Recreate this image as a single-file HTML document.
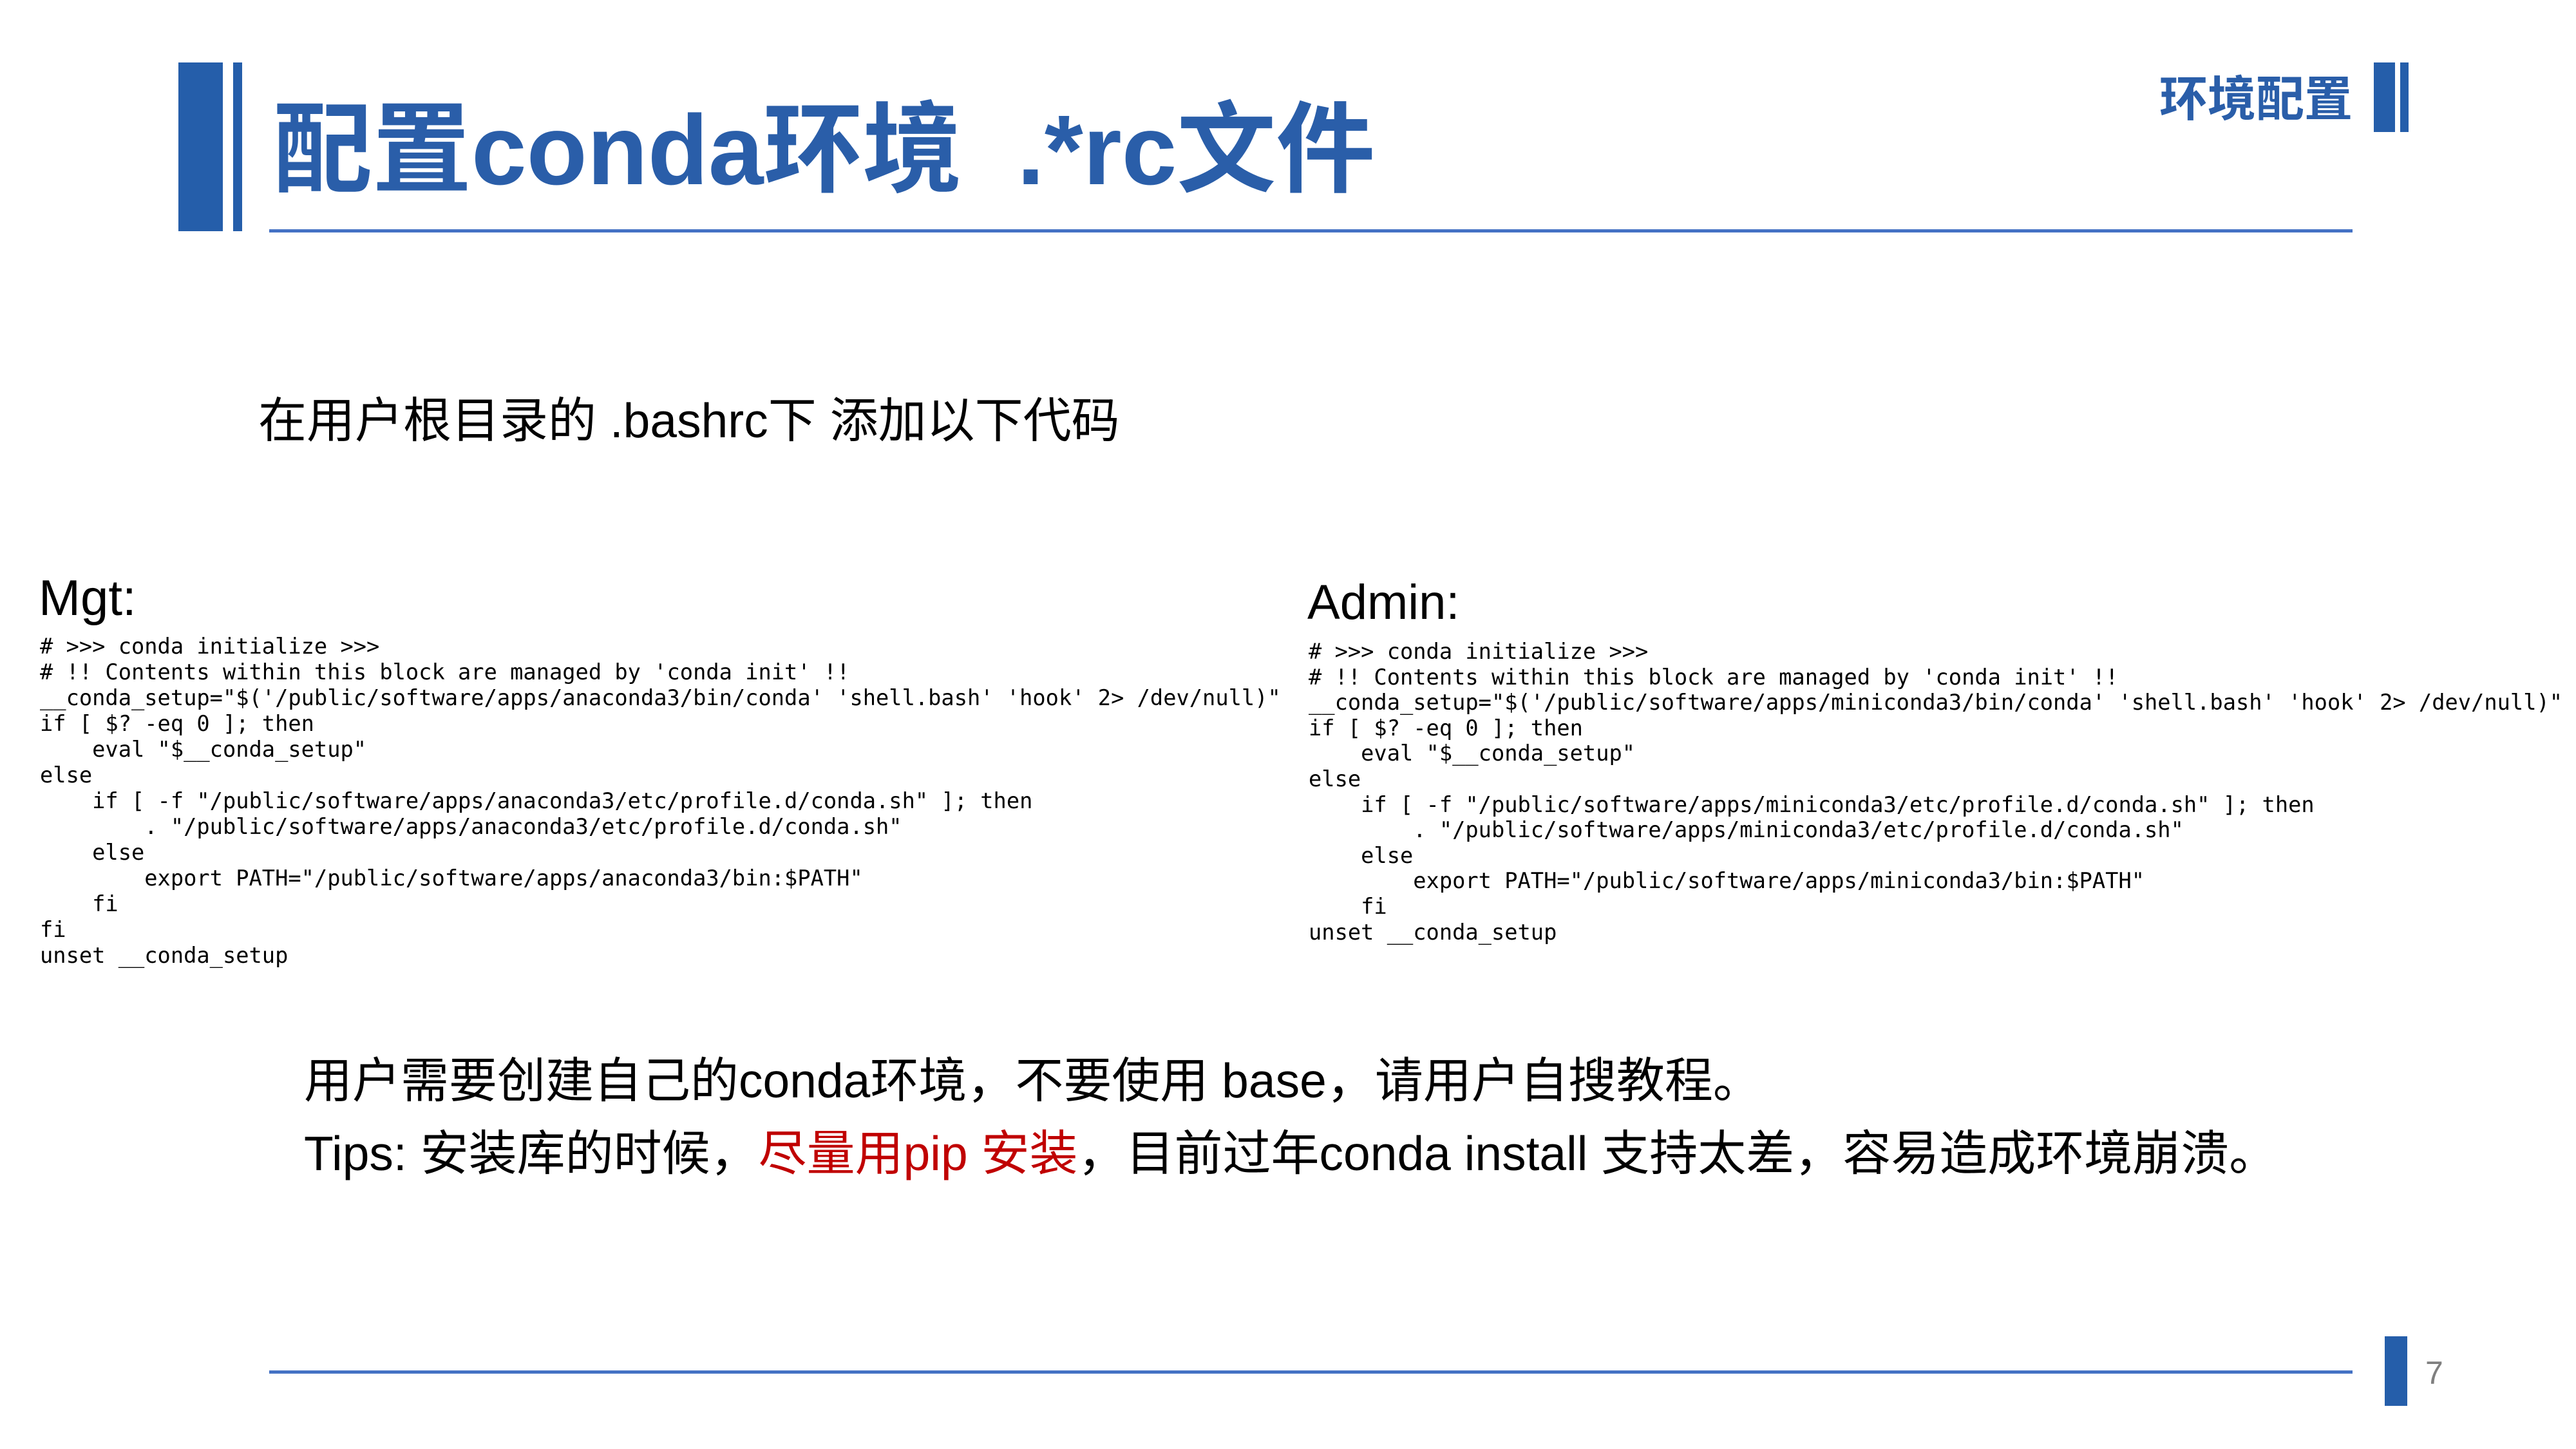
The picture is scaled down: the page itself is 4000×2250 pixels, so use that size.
<!DOCTYPE html>
<html><head><meta charset="utf-8"><style>
html,body{margin:0;padding:0;background:#fff;}
body{width:4000px;height:2250px;position:relative;overflow:hidden;font-family:"Liberation Sans","Noto Sans CJK SC",sans-serif;}
.a{position:absolute;white-space:pre;}
.code{font-family:"DejaVu Sans Mono","Liberation Mono",monospace;font-size:33.7px;line-height:40px;color:#000;}
.blue{background:#255eaa;}
</style></head><body>
<div class="a blue" style="left:277px;top:97px;width:69px;height:262px"></div>
<div class="a blue" style="left:362px;top:97px;width:14px;height:262px"></div>
<div class="a" style="left:424px;top:133px;font-size:154px;line-height:200px;font-weight:bold;color:#2a5ea9;">配置conda环境&nbsp; .*rc文件</div>
<div class="a" style="left:418px;top:356px;width:3235px;height:5px;background:#4472c4"></div>

<div class="a" style="left:3353px;top:104px;font-size:75px;line-height:100px;font-weight:bold;color:#2a5ea9;">环境配置</div>
<div class="a blue" style="left:3686px;top:97px;width:33px;height:108px"></div>
<div class="a blue" style="left:3727px;top:97px;width:13px;height:108px"></div>

<div class="a" style="left:401px;top:608px;font-size:75px;line-height:90px;color:#000;">在用户根目录的 .bashrc下 添加以下代码</div>

<div class="a" style="left:60px;top:878px;font-size:78px;line-height:100px;color:#000;">Mgt:</div>
<div class="a code" style="left:62px;top:984px;"># &gt;&gt;&gt; conda initialize &gt;&gt;&gt;
# !! Contents within this block are managed by 'conda init' !!
__conda_setup="$('/public/software/apps/anaconda3/bin/conda' 'shell.bash' 'hook' 2&gt; /dev/null)"
if [ $? -eq 0 ]; then
    eval "$__conda_setup"
else
    if [ -f "/public/software/apps/anaconda3/etc/profile.d/conda.sh" ]; then
        . "/public/software/apps/anaconda3/etc/profile.d/conda.sh"
    else
        export PATH="/public/software/apps/anaconda3/bin:$PATH"
    fi
fi
unset __conda_setup</div>

<div class="a" style="left:2030px;top:886px;font-size:76px;line-height:100px;color:#000;">Admin:</div>
<div class="a code" style="left:2032px;top:992px;line-height:39.6px;"># &gt;&gt;&gt; conda initialize &gt;&gt;&gt;
# !! Contents within this block are managed by 'conda init' !!
__conda_setup="$('/public/software/apps/miniconda3/bin/conda' 'shell.bash' 'hook' 2&gt; /dev/null)"
if [ $? -eq 0 ]; then
    eval "$__conda_setup"
else
    if [ -f "/public/software/apps/miniconda3/etc/profile.d/conda.sh" ]; then
        . "/public/software/apps/miniconda3/etc/profile.d/conda.sh"
    else
        export PATH="/public/software/apps/miniconda3/bin:$PATH"
    fi
unset __conda_setup</div>

<div class="a" style="left:472px;top:1631px;font-size:75px;line-height:95px;color:#000;">用户需要创建自己的conda环境，不要使用 base，请用户自搜教程。</div>
<div class="a" style="left:472px;top:1744px;font-size:75px;line-height:95px;color:#000;">Tips: 安装库的时候，<span style="color:#c00000">尽量用pip 安装</span>，目前过年conda install 支持太差，容易造成环境崩溃。</div>

<div class="a" style="left:418px;top:2128px;width:3235px;height:5px;background:#4472c4"></div>
<div class="a blue" style="left:3703px;top:2075px;width:35px;height:108px"></div>
<div class="a" style="left:3766px;top:2104px;font-size:50px;line-height:56px;color:#7f7f7f;">7</div>
</body></html>
